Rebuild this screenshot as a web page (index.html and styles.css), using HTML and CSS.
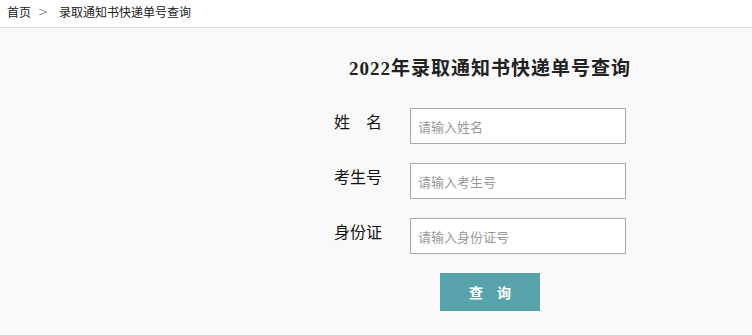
FILE: index.html
```
<!DOCTYPE html>
<html lang="zh-CN">
<head>
    <meta charset="UTF-8">
    <meta name="viewport" content="width=device-width, initial-scale=1.0">
    <title>录取通知书快递单号查询</title>
    <link rel="stylesheet" href="styles.css">
</head>
<body>
    <div class="crumb">
        <span>首页</span>
        <span class="sep">&gt;</span>
        <span>录取通知书快递单号查询</span>
    </div>

    <div class="main">
        <h2 class="title">2022年录取通知书快递单号查询</h2>

        <form class="query-form" onsubmit="return false;">
            <div class="row">
                <label>姓　名</label>
                <input type="text" placeholder="请输入姓名">
            </div>
            <div class="row">
                <label>考生号</label>
                <input type="text" placeholder="请输入考生号">
            </div>
            <div class="row">
                <label>身份证</label>
                <input type="text" placeholder="请输入身份证号">
            </div>
            <div class="actions">
                <button class="btn" type="submit">查　询</button>
            </div>
        </form>
    </div>
</body>
</html>
```

FILE: styles.css
```
* {
    margin: 0;
    padding: 0;
    box-sizing: border-box;
}

body {
    font-family: "Noto Sans CJK SC", "Microsoft YaHei", sans-serif;
    background: #f9f9f9;
    color: #222;
}

.crumb {
    height: 28px;
    background: #fff;
    border-bottom: 1px solid #e0e0e0;
    padding: 0 7px;
    font-size: 12px;
    line-height: 24px;
    color: #222;
    display: flex;
}

.crumb .sep {
    margin: 0 11px 0 7px;
    font-family: "DejaVu Sans", sans-serif;
    font-weight: 200;
    color: #444;
}

.main {
    margin-left: 334px;
    width: 312px;
}

.title {
    margin-top: 29px;
    text-align: center;
    font-family: "Liberation Serif", "Noto Sans CJK SC", serif;
    font-size: 19px;
    line-height: 24px;
    letter-spacing: 1px;
    font-weight: bold;
    color: #222;
}

.query-form {
    margin-top: 27px;
}

.row {
    display: flex;
    align-items: flex-start;
    margin-bottom: 19px;
}

.row label {
    width: 76px;
    font-size: 16px;
    line-height: 26px;
    color: #111;
}

.row input {
    width: 216px;
    height: 36px;
    border: 1px solid #aaa;
    background: #fff;
    padding: 0 7px;
    font-family: "Noto Sans CJK SC", sans-serif;
    font-size: 13px;
    outline: none;
}

.row input::placeholder {
    color: #999;
}

.actions {
    display: flex;
    justify-content: center;
}

.btn {
    width: 100px;
    height: 38px;
    background: #56a3ab;
    color: #fff;
    border: none;
    font-family: "Noto Sans CJK SC", sans-serif;
    font-size: 14px;
    font-weight: bold;
    cursor: pointer;
}
```
